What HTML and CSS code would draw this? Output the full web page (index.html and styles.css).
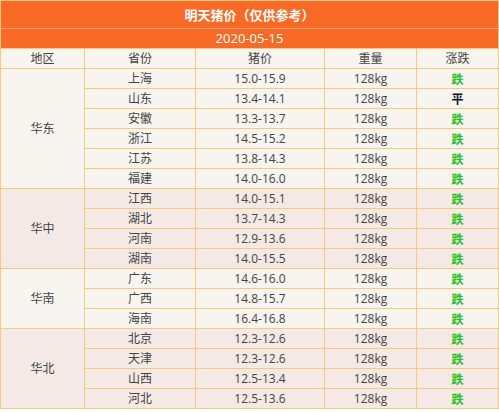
FILE: index.html
```html
<!DOCTYPE html>
<html>
<head>
<meta charset="utf-8">
<link rel="stylesheet" href="styles.css">
</head>
<body>
<table class="price">
  <colgroup>
    <col class="c1"><col class="c2"><col class="c3"><col class="c4"><col class="c5">
  </colgroup>
  <tr class="title"><td colspan="5">明天猪价（仅供参考）</td></tr>
  <tr class="date"><td colspan="5">2020-05-15</td></tr>
  <tr class="head"><td>地区</td><td>省份</td><td>猪价</td><td>重量</td><td>涨跌</td></tr>
  <tr class="g1"><td rowspan="6">华东</td><td>上海</td><td>15.0-15.9</td><td>128kg</td><td class="down">跌</td></tr>
  <tr class="g1"><td>山东</td><td>13.4-14.1</td><td>128kg</td><td class="flat">平</td></tr>
  <tr class="g1"><td>安徽</td><td>13.3-13.7</td><td>128kg</td><td class="down">跌</td></tr>
  <tr class="g1"><td>浙江</td><td>14.5-15.2</td><td>128kg</td><td class="down">跌</td></tr>
  <tr class="g1"><td>江苏</td><td>13.8-14.3</td><td>128kg</td><td class="down">跌</td></tr>
  <tr class="g1"><td>福建</td><td>14.0-16.0</td><td>128kg</td><td class="down">跌</td></tr>
  <tr class="g2"><td rowspan="4">华中</td><td>江西</td><td>14.0-15.1</td><td>128kg</td><td class="down">跌</td></tr>
  <tr class="g2"><td>湖北</td><td>13.7-14.3</td><td>128kg</td><td class="down">跌</td></tr>
  <tr class="g2"><td>河南</td><td>12.9-13.6</td><td>128kg</td><td class="down">跌</td></tr>
  <tr class="g2"><td>湖南</td><td>14.0-15.5</td><td>128kg</td><td class="down">跌</td></tr>
  <tr class="g1"><td rowspan="3">华南</td><td>广东</td><td>14.6-16.0</td><td>128kg</td><td class="down">跌</td></tr>
  <tr class="g1"><td>广西</td><td>14.8-15.7</td><td>128kg</td><td class="down">跌</td></tr>
  <tr class="g1"><td>海南</td><td>16.4-16.8</td><td>128kg</td><td class="down">跌</td></tr>
  <tr class="g2"><td rowspan="4">华北</td><td>北京</td><td>12.3-12.6</td><td>128kg</td><td class="down">跌</td></tr>
  <tr class="g2"><td>天津</td><td>12.3-12.6</td><td>128kg</td><td class="down">跌</td></tr>
  <tr class="g2"><td>山西</td><td>12.5-13.4</td><td>128kg</td><td class="down">跌</td></tr>
  <tr class="g2"><td>河北</td><td>12.5-13.6</td><td>128kg</td><td class="down">跌</td></tr>
</table>
</body>
</html>
```
FILE: styles.css
```css
html, body {
  margin: 0;
  padding: 0;
  background: #ffffff;
}
.price {
  border-collapse: collapse;
  table-layout: fixed;
  width: 498px;
  font-family: "Open Sans", "Noto Sans CJK SC", sans-serif;
  font-size: 12px;
  color: #444444;
}
.c1 { width: 84px; }
.c2 { width: 111px; }
.c3 { width: 129px; }
.c4 { width: 92px; }
.c5 { width: 82px; }
.price td {
  border: 1px solid #f4cb7c;
  padding: 0;
  height: 19px;
  line-height: 19px;
  text-align: center;
  white-space: nowrap;
  overflow: hidden;
}
.price .title td {
  background: #f86a26;
  color: #ffffff;
  font-family: "Noto Sans CJK SC", sans-serif;
  font-weight: bold;
  font-size: 13px;
  height: 27px;
  line-height: 27px;
  border-bottom: 1px solid #f9a173;
}
.price .date td {
  background: #f86a26;
  color: #ffffff;
  font-size: 13px;
  height: 19px;
  line-height: 19px;
  border-top: 1px solid #f9a173;
}
.head td { background: #f8f4f0; }
.g1 td { background: #f8f4f0; }
.g2 td { background: #f4e9e4; }
.price td.down {
  color: #27c124;
  font-weight: bold;
  font-family: "Noto Sans CJK SC", sans-serif;
}
.price td.flat {
  color: #111111;
  font-weight: bold;
  font-family: "Noto Sans CJK SC", sans-serif;
}
```
